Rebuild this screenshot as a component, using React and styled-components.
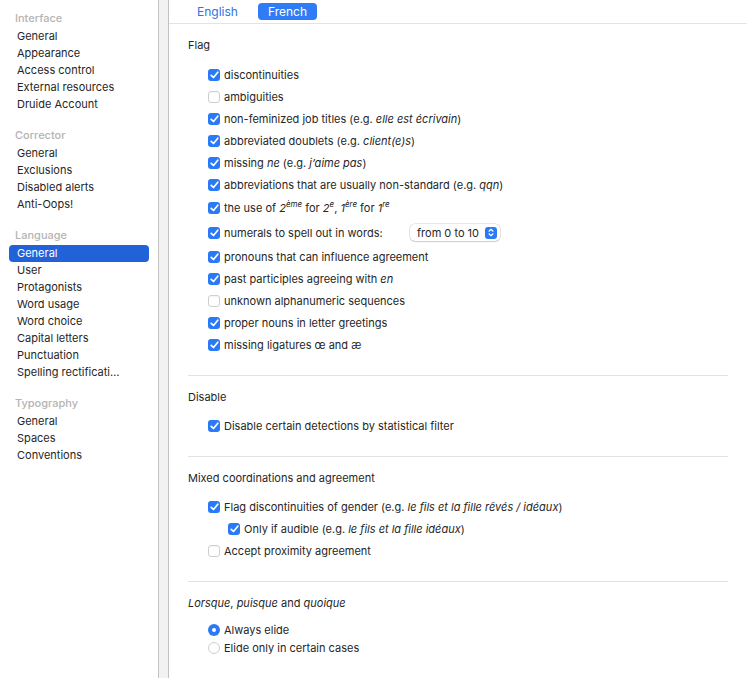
import React from "react";
import styled, { createGlobalStyle } from "styled-components";

const GlobalStyle = createGlobalStyle`
    html, body {
        margin: 0;
        padding: 0;
        background: #ffffff;
    }
    body {
        font-family: Inter, "Liberation Sans", sans-serif;
        font-size: 11px;
        color: #262626;
        -webkit-font-smoothing: antialiased;
    }
`;

const Window = styled.div`
    display: flex;
    height: 678px;
    overflow: hidden;
`;

const Sidebar = styled.nav`
    width: 158px;
    flex-shrink: 0;
    padding-top: 9px;
    box-sizing: border-box;
`;

const Gutter = styled.div`
    width: 9px;
    flex-shrink: 0;
    background: #f2f2f2;
    border-left: 1px solid #c2c2c2;
    border-right: 1px solid #c2c2c2;
`;

const NavGroup = styled.div`
    margin-bottom: 13px;
`;

const NavHeader = styled.div`
    height: 19px;
    line-height: 19px;
    padding-left: 15px;
    color: #b4b4b4;
    font-weight: 500;
`;

const NavItem = styled.div`
    height: 17px;
    line-height: 17px;
    margin: 0 9px;
    padding: 0 28px 0 8px;
    border-radius: 4px;
    white-space: nowrap;
    overflow: hidden;
    text-overflow: ellipsis;
    background: ${props => (props.$active ? "#2262d9" : "transparent")};
    color: ${props => (props.$active ? "#ffffff" : "#262626")};
`;

const Main = styled.main`
    flex: 1;
    min-width: 0;
`;

const TabBar = styled.div`
    display: flex;
    gap: 10px;
    align-items: center;
    height: 23px;
    padding-left: 18px;
    border-bottom: 1px solid #e3e3e3;
`;

const Tab = styled.div`
    height: 17px;
    line-height: 17px;
    padding: 0 10px;
    border-radius: 4px;
    font-size: 12px;
    background: ${props => (props.$active ? "#2f7cf6" : "transparent")};
    color: ${props => (props.$active ? "#ffffff" : "#2d72e6")};
`;

const Section = styled.section`
    margin: 0 19px;
    padding: 13px 0 19px;
    border-bottom: ${props => (props.$last ? "none" : "1px solid #e2e2e2")};
`;

const SectionTitle = styled.div`
    height: 16px;
    line-height: 16px;
`;

const OptionList = styled.div`
    margin-top: ${props => props.$gap || 10}px;
    padding-left: 20px;
`;

const Row = styled.label`
    display: flex;
    align-items: center;
    gap: 4px;
    height: ${props => props.$h || 22}px;
    padding-left: ${props => (props.$nested ? 20 : 0)}px;
    white-space: nowrap;
`;

const Box = styled.span`
    width: 12px;
    height: 12px;
    box-sizing: border-box;
    flex-shrink: 0;
    border-radius: 3px;
    display: flex;
    align-items: center;
    justify-content: center;
    background: ${props => (props.$on ? "#2a7af5" : "#ffffff")};
    border: ${props => (props.$on ? "none" : "1px solid #cfcfcf")};
    box-shadow: ${props => (props.$on ? "none" : "inset 0 1px 1px rgba(0,0,0,0.04)")};
`;

const Radio = styled.span`
    width: 12px;
    height: 12px;
    box-sizing: border-box;
    flex-shrink: 0;
    border-radius: 50%;
    display: flex;
    align-items: center;
    justify-content: center;
    background: ${props => (props.$on ? "#2a7af5" : "#ffffff")};
    border: ${props => (props.$on ? "none" : "1px solid #cfcfcf")};

    &::after {
        content: "";
        width: 4px;
        height: 4px;
        border-radius: 50%;
        background: #ffffff;
        display: ${props => (props.$on ? "block" : "none")};
    }
`;

const FieldLabel = styled.span`
    width: 182px;
`;

const Select = styled.div`
    display: flex;
    align-items: center;
    justify-content: space-between;
    width: 90px;
    height: 17px;
    box-sizing: border-box;
    padding: 0 3px 0 7px;
    border-radius: 5px;
    background: #ffffff;
    box-shadow: 0 0 0 0.5px rgba(0, 0, 0, 0.18), 0 1px 1.5px rgba(0, 0, 0, 0.12);
`;

const Stepper = styled.span`
    width: 12px;
    height: 12px;
    border-radius: 3px;
    background: #2a7af5;
    display: flex;
    align-items: center;
    justify-content: center;
`;

const Sup = styled.sup`
    font-size: 8px;
    line-height: 0;
    vertical-align: 5px;
`;

const Check = () => (
    <svg width="9" height="8" viewBox="0 0 9 8">
        <path d="M1.2 4.3 L3.5 6.5 L7.8 1.2" fill="none" stroke="#fff" strokeWidth="1.7" strokeLinecap="round" strokeLinejoin="round" />
    </svg>
);

const CheckBox = ({ on }) => <Box $on={on}>{on && <Check />}</Box>;

const Option = ({ on, nested, h, children }) => (
    <Row $nested={nested} $h={h}>
        <CheckBox on={on} />
        <span>{children}</span>
    </Row>
);

const RadioOption = ({ on, children }) => (
    <Row $h={18}>
        <Radio $on={on} />
        <span>{children}</span>
    </Row>
);

const navGroups = [
    { title: "Interface", items: ["General", "Appearance", "Access control", "External resources", "Druide Account"] },
    { title: "Corrector", items: ["General", "Exclusions", "Disabled alerts", "Anti-Oops!"] },
    {
        title: "Language",
        items: ["General", "User", "Protagonists", "Word usage", "Word choice", "Capital letters", "Punctuation", "Spelling rectifications"],
        active: 0,
    },
    { title: "Typography", items: ["General", "Spaces", "Conventions"] },
];

export default function App() {
    return (
        <>
            <GlobalStyle />
            <Window>
                <Sidebar>
                    {navGroups.map(group => (
                        <NavGroup key={group.title}>
                            <NavHeader>{group.title}</NavHeader>
                            {group.items.map((item, i) => (
                                <NavItem key={item} $active={group.active === i}>
                                    {item}
                                </NavItem>
                            ))}
                        </NavGroup>
                    ))}
                </Sidebar>
                <Gutter />
                <Main>
                    <TabBar>
                        <Tab>English</Tab>
                        <Tab $active>French</Tab>
                    </TabBar>

                    <Section>
                        <SectionTitle>Flag</SectionTitle>
                        <OptionList $gap={11}>
                            <Option on>discontinuities</Option>
                            <Option>ambiguities</Option>
                            <Option on>
                                non-feminized job titles (e.g. <i>elle est écrivain</i>)
                            </Option>
                            <Option on>
                                abbreviated doublets (e.g. <i>client(e)s</i>)
                            </Option>
                            <Option on>
                                missing <i>ne</i> (e.g. <i>j’aime pas</i>)
                            </Option>
                            <Option on>
                                abbreviations that are usually non-standard (e.g. <i>qqn</i>)
                            </Option>
                            <Option on h={23}>
                                the use of <i>2<Sup>ème</Sup></i> for <i>2<Sup>e</Sup></i>, <i>1<Sup>ère</Sup></i> for{" "}
                                <i>1<Sup>re</Sup></i>
                            </Option>
                            <Row $h={27}>
                                <CheckBox on />
                                <FieldLabel>numerals to spell out in words:</FieldLabel>
                                <Select>
                                    <span>from 0 to 10</span>
                                    <Stepper>
                                        <svg width="6" height="9" viewBox="0 0 6 9">
                                            <path d="M1 3.2 L3 1.3 L5 3.2 M1 5.8 L3 7.7 L5 5.8" fill="none" stroke="#fff" strokeWidth="1.2" strokeLinecap="round" strokeLinejoin="round" />
                                        </svg>
                                    </Stepper>
                                </Select>
                            </Row>
                            <Option on>pronouns that can influence agreement</Option>
                            <Option on>
                                past participles agreeing with <i>en</i>
                            </Option>
                            <Option>unknown alphanumeric sequences</Option>
                            <Option on>proper nouns in letter greetings</Option>
                            <Option on>missing ligatures œ and æ</Option>
                        </OptionList>
                    </Section>

                    <Section>
                        <SectionTitle>Disable</SectionTitle>
                        <OptionList>
                            <Option on>Disable certain detections by statistical filter</Option>
                        </OptionList>
                    </Section>

                    <Section>
                        <SectionTitle>Mixed coordinations and agreement</SectionTitle>
                        <OptionList>
                            <Option on>
                                Flag discontinuities of gender (e.g. <i>le fils et la fille rêvés / idéaux</i>)
                            </Option>
                            <Option on nested>
                                Only if audible (e.g. <i>le fils et la fille idéaux</i>)
                            </Option>
                            <Option>Accept proximity agreement</Option>
                        </OptionList>
                    </Section>

                    <Section $last>
                        <SectionTitle>
                            <i>Lorsque</i>, <i>puisque</i> and <i>quoique</i>
                        </SectionTitle>
                        <OptionList>
                            <RadioOption on>Always elide</RadioOption>
                            <RadioOption>Elide only in certain cases</RadioOption>
                        </OptionList>
                    </Section>
                </Main>
            </Window>
        </>
    );
}
